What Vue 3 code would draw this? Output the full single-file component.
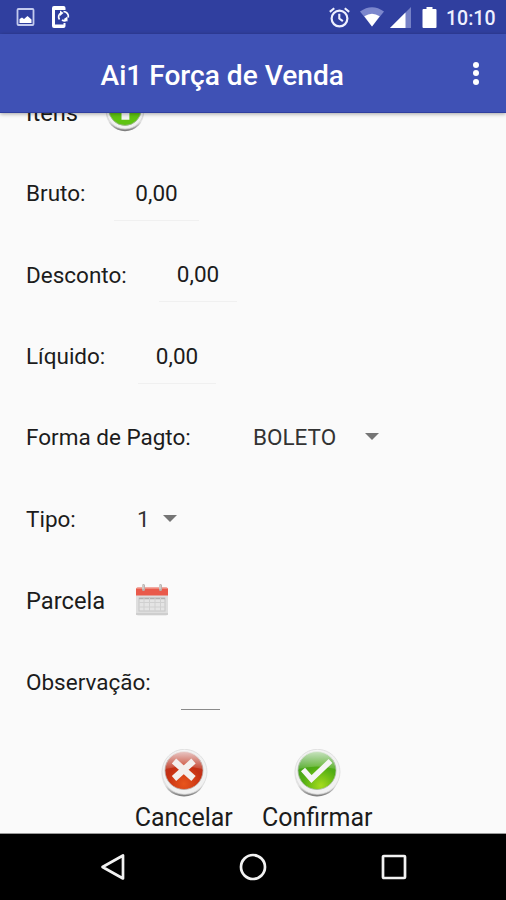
<script setup>
import { ref } from 'vue'

const title = 'Ai1 Força de Venda'
const time = '10:10'

const totals = ref([
  { id: 'bruto', label: 'Bruto:', value: '0,00' },
  { id: 'desconto', label: 'Desconto:', value: '0,00' },
  { id: 'liquido', label: 'Líquido:', value: '0,00' }
])
const selects = ref([
  { id: 'pagto', label: 'Forma de Pagto:', value: 'BOLETO' },
  { id: 'tipo', label: 'Tipo:', value: '1' }
])
</script>

<template>
  <div class="screen">
    <div class="status">
      <div class="status-left">
        <svg class="picture" viewBox="0 0 18 18">
          <rect x="1" y="1" width="16" height="16" rx="1" fill="none" stroke="#c3caee" stroke-width="1.800" />
          <path d="M3 15v-4l2.500-1.500 2 1.500 3.500-3 4 3.500V15z" fill="#fff" />
        </svg>
        <svg class="sync" viewBox="0 0 20 24">
          <path d="M15.500 5V3a2 2 0 0 0-2-2H4a2 2 0 0 0-2 2v18a2 2 0 0 0 2 2h9.500a2 2 0 0 0 2-2v-3h-2v1.500H5V5z" fill="#fff" />
          <path d="M9.500 14.500a4.300 4.300 0 0 1 1.500-6.500M13.500 6.500a5 5 0 0 1 4.800 6M16.500 15.500a5 5 0 0 1-4.500-.5" fill="none" stroke="#fff" stroke-width="1.700" />
          <path d="M10 5.500v5.500l3.500-3zM17.500 16.500v-5l-4 2.800z" fill="#fff" />
        </svg>
      </div>
      <svg class="alarm" viewBox="0 0 20 20">
        <circle cx="10" cy="11" r="7.500" fill="none" stroke="#eef0ff" stroke-width="2.100" />
        <path d="M9.800 6.500V11l3.400 2.500M.8 4.600 5 1.200M19.200 4.600 15 1.200" fill="none" stroke="#eef0ff" stroke-width="2" />
      </svg>
      <svg class="wifi" viewBox="0 0 24 20">
        <path d="M0 4.500Q12-4 24 4.500L12 19.500z" fill="#7c87cd" />
        <path d="M4.300 9.300Q12 4 19.700 9.300L12 19.500z" fill="#fff" />
      </svg>
      <svg class="signal" viewBox="0 0 21 21">
        <path d="M21 0v21H0z" fill="#7681c6" />
        <path d="M15.500 5.500V21H0z" fill="#fff" />
      </svg>
      <svg class="battery" viewBox="0 0 14 21">
        <path d="M4 0h6v2h3a1 1 0 0 1 1 1v17a1 1 0 0 1-1 1H1a1 1 0 0 1-1-1V3a1 1 0 0 1 1-1h3z" fill="#fff" />
      </svg>
      <span class="time">{{ time }}</span>
    </div>

    <header class="toolbar">
      <h1>{{ title }}</h1>
      <div class="more">
        <i></i>
        <i></i>
        <i></i>
      </div>
    </header>

    <main class="content">
      <div class="row itens">
        <label>Itens</label>
        <svg class="add" viewBox="0 0 48 48">
          <defs>
            <linearGradient id="rim" x1="0" y1="0" x2="0" y2="1">
              <stop offset="0" stop-color="#f2f2f2" />
              <stop offset=".75" stop-color="#e4e4e4" />
              <stop offset="1" stop-color="#777" />
            </linearGradient>
          </defs>
          <circle cx="24" cy="25" r="22" fill="url(#rim)" />
          <circle cx="24" cy="23" r="21.500" fill="#f1f1f1" stroke="#d6d6d6" />
          <circle cx="24" cy="22" r="18.500" fill="#5fc312" stroke="#9bb58a" />
          <path d="M20 9h9v8h8v8h-8v9h-9v-9h-8v-8h8z" fill="#f4f4f4" />
        </svg>
      </div>

      <div v-for="t in totals" :key="t.id" class="row" :class="t.id">
        <label>{{ t.label }}</label>
        <span class="field">{{ t.value }}</span>
      </div>

      <div v-for="s in selects" :key="s.id" class="row" :class="s.id">
        <label>{{ s.label }}</label>
        <span class="option">{{ s.value }}</span>
        <i class="arrow"></i>
      </div>

      <div class="row parcela">
        <label>Parcela</label>
        <svg class="calendar" viewBox="0 0 34 34">
          <path d="M1 11h32v18.500a2 2 0 0 1-2 2H3a2 2 0 0 1-2-2z" fill="#dedede" />
          <path d="M1 30h32" stroke="#c9c9c9" stroke-width="1.500" />
          <rect x="4" y="14" width="26" height="13" fill="#e4e4e4" stroke="#c6c6c6" />
          <path d="M4 14.500h26" stroke="#b0b0b0" stroke-width="1.500" />
          <path d="M4 18.500h26M4 23h26M9 14v13M14.500 14v13M20 14v13M25.500 14v13" stroke="#d0d0d0" fill="none" />
          <path d="M1 5a1.500 1.500 0 0 1 1.500-1.500h29A1.500 1.500 0 0 1 33 5v6.500H1z" fill="#e95a4b" />
          <path d="M1 4.500h32" stroke="#ef8a7c" />
          <path d="M8.500 1.500v4M25.500 1.500v4" stroke="#b9b1ae" stroke-width="3" stroke-linecap="round" />
          <path d="M8 1.500v3M25 1.500v3" stroke="#e8e4e2" stroke-linecap="round" />
        </svg>
      </div>

      <div class="row obs">
        <label>Observação:</label>
        <span class="blank"></span>
      </div>

      <div class="actions">
        <div class="action">
          <svg viewBox="0 0 48 48">
            <defs>
              <radialGradient id="red" cx=".5" cy=".85" r=".8">
                <stop offset="0" stop-color="#e8551c" />
                <stop offset=".6" stop-color="#c52f12" />
                <stop offset="1" stop-color="#b5382a" />
              </radialGradient>
              <linearGradient id="gloss" x1="0" y1="0" x2="0" y2="1">
                <stop offset="0" stop-color="#fff" stop-opacity=".75" />
                <stop offset="1" stop-color="#fff" stop-opacity=".12" />
              </linearGradient>
            </defs>
            <circle cx="24" cy="25" r="22.500" fill="url(#rim)" />
            <circle cx="24.500" cy="22.800" r="22.500" fill="#f1f1f1" stroke="#dcdcdc" stroke-width=".8" />
            <circle cx="24" cy="21.500" r="19" fill="url(#red)" stroke="#b9aaa5" stroke-width=".8" />
            <path d="M5.500 20a18.500 18.500 0 0 1 37 0Q24 15 5.500 20z" fill="url(#gloss)" />
            <path d="M14 12 33.500 29.500M33.500 12 14 29.500" stroke="#f3efed" stroke-width="6.500" />
          </svg>
          <span>Cancelar</span>
        </div>
        <div class="action">
          <svg viewBox="0 0 48 48">
            <defs>
              <radialGradient id="green" cx=".6" cy=".9" r=".8">
                <stop offset="0" stop-color="#a5dc1c" />
                <stop offset=".6" stop-color="#51ad13" />
                <stop offset="1" stop-color="#42a01f" />
              </radialGradient>
            </defs>
            <circle cx="24" cy="25" r="22.500" fill="url(#rim)" />
            <circle cx="24.500" cy="22.800" r="22.500" fill="#f1f1f1" stroke="#dcdcdc" stroke-width=".8" />
            <circle cx="24" cy="21.500" r="19" fill="url(#green)" stroke="#a7b99f" stroke-width=".8" />
            <path d="M5.500 20a18.500 18.500 0 0 1 37 0Q24 15 5.500 20z" fill="url(#gloss)" />
            <path d="M10 20.500 18.500 30 37.500 12" fill="none" stroke="#f5f5f5" stroke-width="5.500" />
          </svg>
          <span>Confirmar</span>
        </div>
      </div>
    </main>

    <nav class="navbar">
      <svg viewBox="0 0 28 28">
        <path d="M24 2.500v23L3.500 14z" fill="none" stroke="#f2f2f2" stroke-width="2.700" stroke-linejoin="round" />
      </svg>
      <svg viewBox="0 0 28 28">
        <circle cx="14" cy="14" r="12" fill="none" stroke="#f2f2f2" stroke-width="2.700" />
      </svg>
      <svg viewBox="0 0 28 28">
        <rect x="3" y="3" width="22" height="22" rx=".8" fill="none" stroke="#f2f2f2" stroke-width="2.700" />
      </svg>
    </nav>
  </div>
</template>

<style>
body {
  margin: 0;
  background: #fafafa;
}
</style>

<style scoped>
.screen {
  display: flex;
  flex-direction: column;
  width: 506px;
  height: 900px;
  overflow: hidden;
  background: #fafafa;
  color: #1c1c1c;
  font-family: Roboto, sans-serif;
}

svg {
  display: block;
  flex: none;
}

.status {
  display: flex;
  align-items: center;
  flex: none;
  height: 34px;
  padding: 0 10px 0 16px;
  box-sizing: border-box;
  background: #303f9f;
}

.status-left {
  display: flex;
  align-items: center;
  flex: 1;
  gap: 15px;
}

.picture {
  width: 19px;
  height: 18px;
}

.sync {
  width: 20px;
  height: 24px;
}

.alarm {
  width: 21px;
  height: 21px;
  margin-right: 10px;
}

.wifi {
  width: 24px;
  height: 20px;
  margin-right: 6px;
}

.signal {
  width: 21px;
  height: 21px;
  margin-right: 11px;
}

.battery {
  width: 15px;
  height: 21px;
  margin-right: 9px;
}

.time {
  width: 50px;
  padding-top: 3px;
  color: #eef0ff;
  font-size: 19.500px;
  font-weight: 500;
  white-space: nowrap;
}

/* sits over the scrolled form */
.toolbar {
  position: relative;
  z-index: 1;
  display: flex;
  align-items: center;
  justify-content: space-between;
  flex: none;
  height: 79px;
  padding: 0 27px 0 100.500px;
  box-sizing: border-box;
  background: #3f51b5;
  border-bottom: 1px solid #303f9f;
  box-shadow: 0 1px 4px rgba(0, 0, 0, 0.35);
}

h1 {
  margin: 0;
  padding-top: 4px;
  color: #fff;
  font-size: 28.100px;
  font-weight: 500;
}

.more {
  display: flex;
  flex-direction: column;
  gap: 2.500px;
}

.more i {
  width: 6px;
  height: 6px;
  border-radius: 50%;
  background: #fff;
}

.content {
  flex: 1;
  min-height: 0;
  margin-top: -40.500px;
  overflow: hidden;
  border-bottom: 1px solid #9a9a9a;
}

.row {
  display: flex;
  align-items: center;
  height: 81.330px;
  padding-left: 26px;
  font-size: 22.500px;
}

label {
  flex: none;
  padding-bottom: 2px;
  white-space: nowrap;
}

.itens label {
  width: 78px;
}

.itens,
.parcela {
  font-size: 23.700px;
}

.itens label,
.parcela label,
.obs label {
  padding-bottom: 0;
}

.add {
  width: 42px;
  height: 42px;
  margin-top: -4px;
}

.field {
  width: 85px;
  height: 53px;
  box-sizing: border-box;
  border-bottom: 1px solid #f0f0f0;
  line-height: 51px;
  text-align: center;
}

.bruto label {
  width: 88px;
}

.desconto label {
  width: 133px;
}

.desconto .field,
.liquido .field {
  width: 78px;
}

.liquido label {
  width: 112px;
}

.pagto label {
  width: 227px;
}

.tipo label {
  width: 111px;
}

.pagto .option {
  width: 112px;
}

.tipo .option {
  width: 26px;
}

.option {
  padding-bottom: 2px;
  color: #333;
}

.arrow {
  margin-bottom: 3px;
  border: 7px solid transparent;
  border-top-color: #757575;
  border-bottom: 0;
}

.parcela label {
  width: 109px;
}

.calendar {
  width: 34px;
  height: 34px;
}

.obs label {
  width: 155px;
}

.blank {
  width: 39px;
  height: 55px;
  border-bottom: 1px solid #8a8a8a;
}

.actions {
  display: flex;
  padding: 25.500px 0 0 117px;
}

.action {
  display: flex;
  flex-direction: column;
  align-items: center;
  width: 133.500px;
}

.action svg {
  width: 48px;
  height: 48px;
}

.action span {
  font-size: 25px;
  line-height: 41px;
}

.navbar {
  display: flex;
  align-items: center;
  justify-content: center;
  gap: 112.500px;
  flex: none;
  height: 66px;
  background: #000;
}

.navbar svg {
  width: 28px;
  height: 28px;
}
</style>
